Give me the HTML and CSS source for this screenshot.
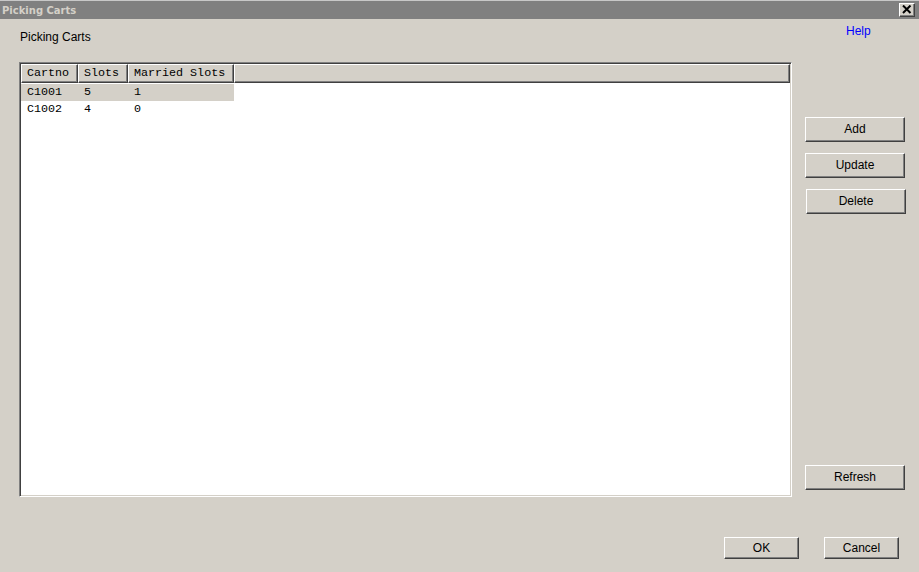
FILE: index.html
```html
<!DOCTYPE html>
<html>
<head>
<meta charset="utf-8">
<title>Picking Carts</title>
<link rel="stylesheet" href="styles.css">
</head>
<body>
<div class="window">
  <div class="titlebar">
    <span class="title">Picking Carts</span>
    <span class="close"><svg width="10" height="9" viewBox="0 0 10 9"><path d="M1 0.5 L8.5 8 M8.5 0.5 L1 8" stroke="#000" stroke-width="2" fill="none"/></svg></span>
  </div>
  <div class="main">
    <div class="left">
      <div class="label">Picking Carts</div>
      <div class="table">
        <div class="thead">
          <div class="th c1">Cartno</div>
          <div class="th c2">Slots</div>
          <div class="th c3">Married Slots</div>
          <div class="th filler"></div>
        </div>
        <div class="row selected">
          <div class="td c1">C1001</div>
          <div class="td c2">5</div>
          <div class="td c3">1</div>
        </div>
        <div class="row">
          <div class="td c1">C1002</div>
          <div class="td c2">4</div>
          <div class="td c3">0</div>
        </div>
      </div>
    </div>
    <div class="right">
      <div class="help">Help</div>
      <button class="btn side add">Add</button>
      <button class="btn side update">Update</button>
      <button class="btn side delete">Delete</button>
      <button class="btn side refresh">Refresh</button>
    </div>
  </div>
  <div class="footer">
    <button class="btn foot">OK</button>
    <button class="btn foot">Cancel</button>
  </div>
</div>
</body>
</html>
```
FILE: styles.css
```css
* { box-sizing: border-box; }
html, body { margin: 0; padding: 0; }
body {
  width: 919px;
  height: 572px;
  background: #d4d0c8;
  font-family: "Liberation Sans", Arial, sans-serif;
  font-size: 12px;
  color: #000;
  overflow: hidden;
}
.window {
  width: 919px;
  height: 572px;
  display: flex;
  flex-direction: column;
  background: #d4d0c8;
}
.titlebar {
  height: 19px;
  background: #808080;
  border-top: 1px solid #c8c8c8;
  display: flex;
  align-items: center;
  justify-content: space-between;
  padding: 0 4px 0 2px;
}
.title {
  font-family: "DejaVu Sans", Verdana, sans-serif;
  font-weight: bold;
  font-size: 10px;
  color: #d4d0c8;
  letter-spacing: 0;
}
.close {
  width: 16px;
  height: 14px;
  background: #d4d0c8;
  border-top: 1px solid #fff;
  border-left: 1px solid #fff;
  border-right: 1px solid #404040;
  border-bottom: 1px solid #404040;
  box-shadow: inset -1px -1px 0 #808080;
  display: flex;
  align-items: center;
  justify-content: center;
  padding-bottom: 1px;
}
.close svg { display: block; }
.main {
  display: flex;
  height: 478px;
}
.left {
  width: 792px;
  padding-left: 19px;
}
.label {
  margin-top: 11px;
  line-height: 14px;
  height: 14px;
  padding-left: 1px;
}
.table {
  margin-top: 18px;
  width: 773px;
  height: 435px;
  background: #fff;
  border-top: 1px solid #808080;
  border-left: 1px solid #808080;
  border-right: 1px solid #fff;
  border-bottom: 1px solid #fff;
  box-shadow: inset 1px 1px 0 #404040, inset -1px -1px 0 #d4d0c8;
  padding: 1px;
  font-family: "Liberation Mono", "Courier New", monospace;
  font-size: 11.7px;
}
.thead {
  display: flex;
  height: 19px;
}
.th {
  height: 19px;
  line-height: 17px;
  background: #d4d0c8;
  border-top: 1px solid #fff;
  border-left: 1px solid #fff;
  border-right: 1px solid #404040;
  border-bottom: 1px solid #404040;
  box-shadow: inset -1px -1px 0 #808080;
  padding-left: 5px;
  white-space: nowrap;
}
.c1 { width: 57px; }
.c2 { width: 50px; }
.c3 { width: 106px; }
.filler { flex: 1; }
.row {
  display: flex;
  height: 17px;
  line-height: 17px;
  width: 213px;
}
.row:first-of-type { }
.thead + .row { margin-top: 1px; }
.row.selected { background: #d4d0c8; }
.td {
  padding-left: 6px;
  white-space: nowrap;
}
.right {
  width: 127px;
  display: flex;
  flex-direction: column;
  align-items: flex-start;
}
.help {
  margin-top: 5px;
  margin-left: 54px;
  line-height: 14px;
  height: 14px;
  color: #0000ff;
}
.btn {
  font-family: "Liberation Sans", Arial, sans-serif;
  font-size: 12px;
  color: #000;
  background: #d4d0c8;
  border-top: 1px solid #fff;
  border-left: 1px solid #fff;
  border-right: 1px solid #404040;
  border-bottom: 1px solid #404040;
  box-shadow: inset -1px -1px 0 #808080;
  padding: 0 0 1px 0;
  margin: 0;
  text-align: center;
}
.side {
  width: 100px;
  height: 25px;
  margin-left: 13px;
}
.add { margin-top: 79px; }
.update { margin-top: 11px; }
.delete { margin-top: 11px; margin-left: 14px; }
.refresh { margin-top: 251px; }
.footer {
  display: flex;
  justify-content: flex-end;
  gap: 25px;
  padding-right: 20px;
  margin-top: 40px;
}
.foot {
  width: 75px;
  height: 22px;
}
```
